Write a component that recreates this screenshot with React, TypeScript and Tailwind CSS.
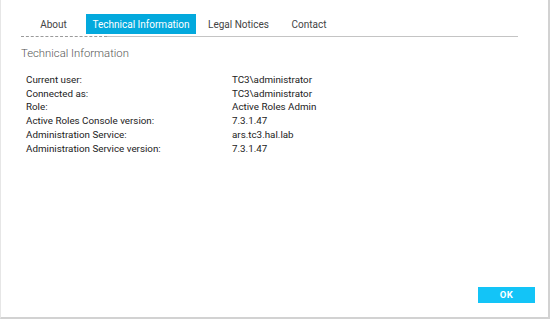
import React from "react";

const tabs = [
  { label: "About", w: "w-[65px]" },
  { label: "Technical Information", w: "w-[110px]", active: true },
  { label: "Legal Notices", w: "w-[85px]" },
  { label: "Contact", w: "w-[56px]" },
];

const rows = [
  ["Current user:", "TC3\\administrator"],
  ["Connected as:", "TC3\\administrator"],
  ["Role:", "Active Roles Admin"],
  ["Active Roles Console version:", "7.3.1.47"],
  ["Administration Service:", "ars.tc3.hal.lab"],
  ["Administration Service version:", "7.3.1.47"],
];

export default function App() {
  return (
    <div
      className="w-[550px] h-[319px] bg-white border-l border-[#e6e6e6] border-r-2 border-r-[#d2d2d2] border-b-2 border-b-[#d2d2d2] flex flex-col overflow-hidden"
      style={{ fontFamily: "Roboto, 'Liberation Sans', Arial, sans-serif" }}
    >
      {/* Tabs */}
      <div className="pl-[20px] pt-[14px] w-[517px]">
        <div className="flex h-[20px]">
          {tabs.map((t) => (
            <div
              key={t.label}
              className={`${t.w} flex items-center justify-center text-[10px] ${
                t.active ? "bg-[#03a9dd] text-white" : "text-[#444]"
              }`}
            >
              {t.label}
            </div>
          ))}
        </div>
        <div className="mt-[2px] flex h-px">
          <div className="w-[86px] border-t border-dashed border-[#9a9a9a]" />
          <div className="flex-1 bg-[#c4c4c4]" />
        </div>
      </div>

      {/* Title */}
      <div className="pl-[20px] mt-[9px] text-[11.3px] font-light text-[#555] leading-[16px]">
        Technical Information
      </div>

      {/* Info rows */}
      <div className="pl-[25px] mt-[11px] flex flex-col text-[9.8px] text-[#222] leading-[13.7px]">
        {rows.map(([k, v]) => (
          <div key={k} className="flex">
            <div className="w-[206px]">{k}</div>
            <div>{v}</div>
          </div>
        ))}
      </div>

      {/* Footer */}
      <div className="mt-auto flex justify-end pr-[13px] pb-[14px]">
        <button className="w-[57px] h-[16px] bg-[#13c4f7] text-white text-[9.5px] font-bold tracking-[0.5px] flex items-center justify-center">
          OK
        </button>
      </div>
    </div>
  );
}
